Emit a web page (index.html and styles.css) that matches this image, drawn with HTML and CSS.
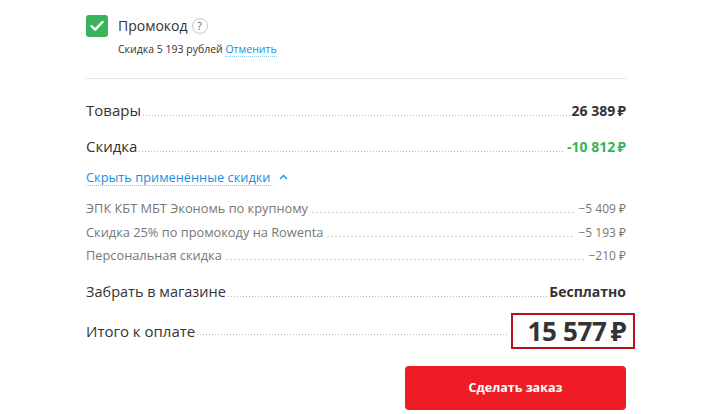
FILE: index.html
```html
<!DOCTYPE html>
<html lang="ru">
<head>
<meta charset="utf-8">
<link rel="stylesheet" href="styles.css">
</head>
<body>
<div class="summary">
  <div class="promo">
    <span class="check">
      <svg width="14" height="12" viewBox="0 0 14 12"><path d="M1.5 6.2 L5.2 9.6 L12.5 2" fill="none" stroke="#fff" stroke-width="2.4" stroke-linecap="round" stroke-linejoin="round"/></svg>
    </span>
    <div class="promo-text">
      <div class="promo-title">Промокод <span class="q">?</span></div>
      <div class="promo-sub">Скидка 5 193 рублей <a class="cancel">Отменить</a></div>
    </div>
  </div>
  <div class="sep"></div>

  <div class="row r-goods"><span class="lbl">Товары</span><span class="dots"></span><span class="val">26 389&#8201;₽</span></div>
  <div class="row r-disc"><span class="lbl">Скидка</span><span class="dots"></span><span class="val green">-10 812&#8201;₽</span></div>
  <div class="toggle"><a class="hide">Скрыть применённые скидки</a>
    <svg class="caret" width="9" height="6" viewBox="0 0 9 6"><path d="M1 5 L4.5 1.5 L8 5" fill="none" stroke="#1a8ee0" stroke-width="1.3"/></svg>
  </div>
  <div class="subs">
    <div class="sub"><span class="lbl">ЭПК КБТ МБТ Экономь по крупному</span><span class="dash"></span><span class="sval">−5 409 ₽</span></div>
    <div class="sub"><span class="lbl">Скидка 25% по промокоду на Rowenta</span><span class="dash"></span><span class="sval">−5 193 ₽</span></div>
    <div class="sub"><span class="lbl">Персональная скидка</span><span class="dash"></span><span class="sval">−210 ₽</span></div>
  </div>
  <div class="row r-pick"><span class="lbl">Забрать в магазине</span><span class="dots"></span><span class="val">Бесплатно</span></div>
  <div class="row r-total"><span class="lbl">Итого к оплате</span><span class="dots"></span><span class="total">15 577&#8201;₽</span></div>
  <div class="actions"><button class="order">Сделать заказ</button></div>
</div>
</body>
</html>
```
FILE: styles.css
```css
html, body { margin: 0; padding: 0; background: #fff; }
body { font-family: "Open Sans", "Noto Sans", sans-serif; color: #333; }
.summary { width: 540px; margin-left: 86px; padding-top: 15px; }

.promo { display: flex; gap: 10px; align-items: flex-start; }
.check { width: 22px; height: 22px; border-radius: 3px; background: #3ab45a; display: flex; align-items: center; justify-content: center; flex: none; }
.promo-title { font-size: 14px; line-height: 22px; color: #333; display: flex; align-items: center; gap: 4px; }
.q { display: inline-flex; width: 14px; height: 14px; border: 1px solid #c8c8c8; border-radius: 50%; font-size: 10px; line-height: 1; color: #555; align-items: center; justify-content: center; }
.promo-sub { font-size: 10.5px; line-height: 16px; color: #333; margin-top: 4px; }
.cancel { color: #1a8ee0; border-bottom: 1px dotted #8cc8f0; }

.sep { height: 1px; background: #e6e6e6; margin-top: 21px; }

.row { display: flex; align-items: baseline; font-size: 15px; line-height: 20px; }
.lbl { flex: none; }
.dots { flex: 1; height: 1px; margin: 0 2px; align-self: baseline; background-image: linear-gradient(to right, #b8b8b8 1px, transparent 1px); background-size: 3px 1px; background-repeat: repeat-x; }
.val { font-size: 14px; font-weight: 700; flex: none; }
.green { color: #35b45b; }
.r-goods { margin-top: 21px; }
.r-disc { margin-top: 15px; }

.toggle { margin-top: 12px; font-size: 12.8px; line-height: 18px; display: flex; align-items: center; gap: 8px; }
.hide { color: #1a8ee0; border-bottom: 1px dotted #8cc8f0; line-height: 16px; }
.caret { margin-top: -2px; }

.subs { margin-top: 11px; }
.sub { display: flex; align-items: baseline; font-size: 12.8px; line-height: 23.5px; color: #777; }
.dash { flex: 1; height: 1px; margin: 0 4px; background-image: linear-gradient(to right, #d0d0d0 2px, transparent 2px); background-size: 4px 1px; background-repeat: repeat-x; }
.sval { flex: none; color: #777; font-size: 12px; }

.r-pick { margin-top: 14px; font-size: 14.5px; }
.r-total { margin-top: 11px; height: 36px; align-items: center; }
.r-total .dots { align-self: center; margin-top: 8px; }
.total { flex: none; font-size: 26px; font-weight: 700; line-height: 32px; border: 2px solid #b5121b; padding: 0 7px 0 14px; margin-right: -9px; color: #333; letter-spacing: -0.3px; }

.actions { display: flex; justify-content: flex-end; margin-top: 17px; }
.order { width: 221px; height: 44px; border: none; border-radius: 4px; background: #ee1c25; color: #fff; font-family: "Open Sans", sans-serif; font-size: 12.5px; font-weight: 700; }
```
